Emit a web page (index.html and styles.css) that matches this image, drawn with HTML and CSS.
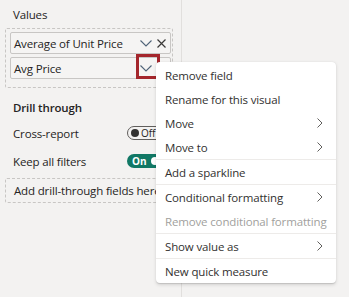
FILE: index.html
```html
<!DOCTYPE html>
<html lang="en">
<head>
  <meta charset="UTF-8">
  <title>Field menu</title>
  <link rel="stylesheet" href="styles.css">
</head>
<body>
  <div class="pane">
    <div class="section-label">Values</div>
    <div class="well">
      <div class="field">
        <span class="field-name">Average of Unit Price</span>
        <span class="field-icons">
          <svg class="chev-down" width="12" height="7" viewBox="0 0 12 7"><path d="M0.5 0.5l5.5 5.5 5.5-5.5" /></svg>
          <svg class="remove" width="9" height="9" viewBox="0 0 9 9"><path d="M0.5 0.5l8 8M8.5 0.5l-8 8" /></svg>
        </span>
      </div>
      <div class="field">
        <span class="field-name">Avg Price</span>
        <span class="field-icons">
          <svg class="chev-down" width="12" height="7" viewBox="0 0 12 7"><path d="M0.5 0.5l5.5 5.5 5.5-5.5" /></svg>
          <svg class="remove hidden" width="9" height="9" viewBox="0 0 9 9"><path d="M0.5 0.5l8 8M8.5 0.5l-8 8" /></svg>
        </span>
      </div>
    </div>

    <div class="section-title">Drill through</div>
    <div class="toggle-row">
      <span>Cross-report</span>
      <span class="toggle off"><i></i>Off</span>
    </div>
    <div class="toggle-row">
      <span>Keep all filters</span>
      <span class="toggle on">On<i></i></span>
    </div>
    <div class="drop-well">Add drill-through fields here</div>
  </div>

  <!-- highlight round the open chevron -->
  <div class="highlight"></div>

  <!-- context menu -->
  <div class="menu">
    <div class="menu-item">Remove field</div>
    <div class="menu-item">Rename for this visual</div>
    <div class="menu-item">Move <svg class="chev-right" width="6" height="10" viewBox="0 0 6 10"><path d="M0.5 0.5l4.5 4.5-4.5 4.5" /></svg></div>
    <div class="menu-item">Move to <svg class="chev-right" width="6" height="10" viewBox="0 0 6 10"><path d="M0.5 0.5l4.5 4.5-4.5 4.5" /></svg></div>
    <div class="menu-divider"></div>
    <div class="menu-item">Add a sparkline</div>
    <div class="menu-divider"></div>
    <div class="menu-item">Conditional formatting <svg class="chev-right" width="6" height="10" viewBox="0 0 6 10"><path d="M0.5 0.5l4.5 4.5-4.5 4.5" /></svg></div>
    <div class="menu-item disabled">Remove conditional formatting</div>
    <div class="menu-divider"></div>
    <div class="menu-item">Show value as <svg class="chev-right" width="6" height="10" viewBox="0 0 6 10"><path d="M0.5 0.5l4.5 4.5-4.5 4.5" /></svg></div>
    <div class="menu-divider"></div>
    <div class="menu-item">New quick measure</div>
  </div>
</body>
</html>
```

FILE: styles.css
```css
* {
  margin: 0;
  padding: 0;
  box-sizing: border-box;
}

body {
  font-family: 'Open Sans', 'Noto Sans', sans-serif;
  font-size: 11.5px;
  letter-spacing: -0.15px;
  color: #252423;
  background: #f3f2f1;
  width: 349px;
  height: 297px;
  overflow: hidden;
  position: relative;
}

.pane {
  width: 182px;
  height: 297px;
  border-right: 1px solid #e1dfdd;
  padding: 7px 8px 0 5px;
}

.section-label {
  line-height: 16px;
  padding-left: 8px;
  margin-bottom: 5px;
}

.well {
  border: 1px dashed #c8c6c4;
  border-radius: 2px;
  padding: 3px 1px 8px 4px;
  display: flex;
  flex-direction: column;
  gap: 3px;
}

.field {
  height: 22px;
  border: 1px solid #c8c6c4;
  border-radius: 2px;
  background: #f5f4f3;
  display: flex;
  align-items: center;
  justify-content: space-between;
  padding: 0 4px 0 3px;
}

.field-icons {
  display: flex;
  align-items: center;
  gap: 5px;
}

.chev-down path {
  fill: none;
  stroke: #4f6378;
  stroke-width: 1.1;
}

.remove path {
  fill: none;
  stroke: #3b3a39;
  stroke-width: 1.2;
}

.hidden {
  visibility: hidden;
}

.section-title {
  font-weight: 600;
  line-height: 16px;
  padding-left: 8px;
  margin-top: 12px;
}

.toggle-row {
  height: 20px;
  margin-top: 7px;
  padding-left: 8px;
  display: grid;
  grid-template-columns: 114px auto;
  align-items: center;
  white-space: nowrap;
}

.toggle-row + .toggle-row {
  margin-top: 8px;
}

.toggle {
  width: 36px;
  height: 14px;
  border-radius: 7px;
  display: flex;
  align-items: center;
  gap: 2px;
  font-size: 10px;
  letter-spacing: 0;
}

.toggle i {
  width: 8px;
  height: 8px;
  border-radius: 50%;
}

.toggle.off {
  border: 1px solid #605e5c;
  padding-left: 3px;
}

.toggle.off i {
  background: #323130;
}

.toggle.on {
  background: #117865;
  color: #ffffff;
  font-weight: 700;
  padding-left: 5px;
  gap: 4px;
}

.toggle.on i {
  background: #ffffff;
}

.drop-well {
  margin-top: 7px;
  height: 25px;
  border: 1px dashed #c8c6c4;
  border-radius: 2px;
  padding-left: 8px;
  line-height: 23px;
  white-space: nowrap;
  overflow: hidden;
}

.highlight {
  position: absolute;
  left: 136px;
  top: 54px;
  width: 24px;
  height: 25px;
  border: 3px solid #a4262c;
}

.menu {
  position: absolute;
  left: 156px;
  top: 62px;
  width: 180px;
  background: #ffffff;
  border-radius: 4px;
  padding-top: 1px;
  box-shadow: 0 1.6px 3.6px rgba(0, 0, 0, 0.13), 0 0.3px 0.9px rgba(0, 0, 0, 0.11);
}

.menu-item {
  height: 24px;
  padding: 0 13px 0 9px;
  display: flex;
  align-items: center;
  justify-content: space-between;
  white-space: nowrap;
  color: #323130;
}

.menu-item.disabled {
  color: #a19f9d;
}

.chev-right path {
  fill: none;
  stroke: #605e5c;
  stroke-width: 1;
}

.menu-divider {
  height: 1px;
  background: #edebe9;
}
```
